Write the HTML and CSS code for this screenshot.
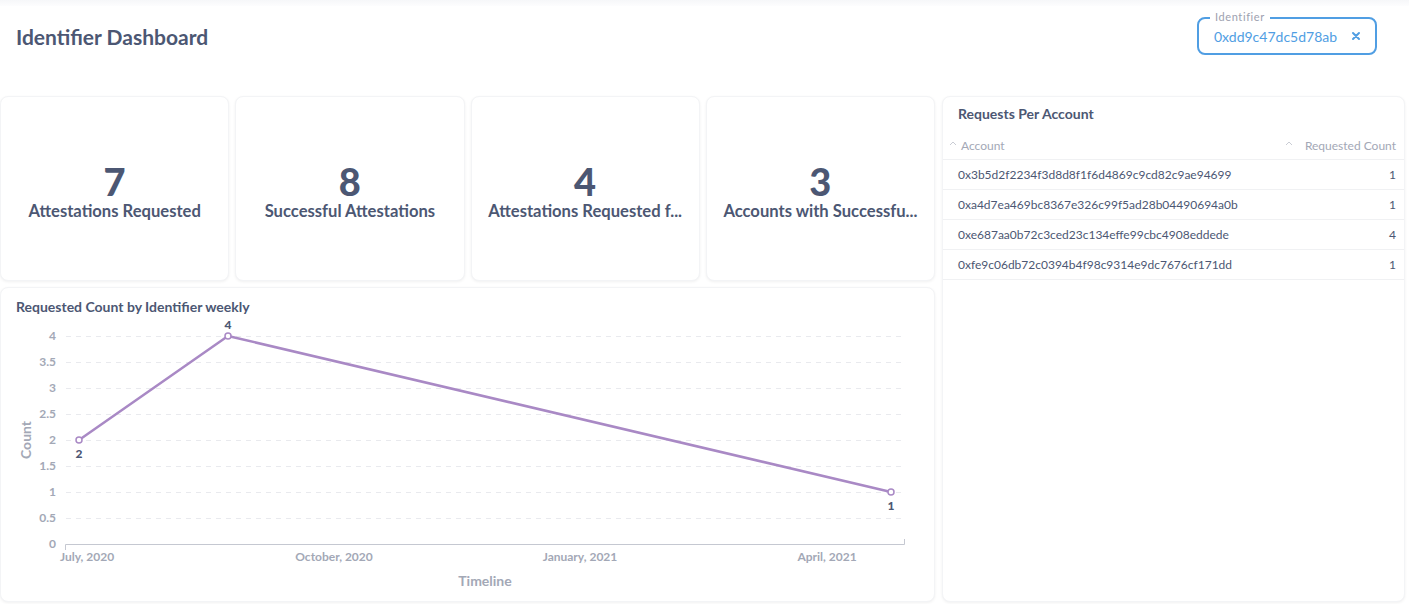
FILE: index.html
```html
<!DOCTYPE html>
<html>
<head>
<meta charset="utf-8">
<link rel="stylesheet" href="styles.css">
</head>
<body>
<div class="topbar"></div>
<header class="header">
  <h1 class="title">Identifier Dashboard</h1>
  <div class="filter">
    <span class="filter-label">Identifier</span>
    <span class="filter-value">0xdd9c47dc5d78ab</span>
    <svg class="filter-x" width="10" height="10" viewBox="0 0 10 10"><path d="M2 2L8 8M8 2L2 8" stroke="#509ee3" stroke-width="2" stroke-linecap="round"/></svg>
  </div>
</header>
<main class="grid">
  <section class="stats">
    <div class="card stat"><div class="stat-num">7</div><div class="stat-label">Attestations Requested</div></div>
    <div class="card stat"><div class="stat-num">8</div><div class="stat-label">Successful Attestations</div></div>
    <div class="card stat"><div class="stat-num">4</div><div class="stat-label">Attestations Requested f...</div></div>
    <div class="card stat"><div class="stat-num">3</div><div class="stat-label">Accounts with Successfu...</div></div>
  </section>
  <section class="card table-card">
    <div class="card-title table-title">Requests Per Account</div>
    <div class="trow thead">
      <span class="th th-left"><svg class="caret" width="8" height="5" viewBox="0 0 8 5"><path d="M1 4L4 1L7 4" fill="none" stroke="#c9ccd4" stroke-width="1"/></svg>Account</span>
      <span class="th th-right"><svg class="caret caret-r" width="8" height="5" viewBox="0 0 8 5"><path d="M1 4L4 1L7 4" fill="none" stroke="#c9ccd4" stroke-width="1"/></svg>Requested Count</span>
    </div>
    <div class="trow"><span>0x3b5d2f2234f3d8d8f1f6d4869c9cd82c9ae94699</span><span>1</span></div>
    <div class="trow"><span>0xa4d7ea469bc8367e326c99f5ad28b04490694a0b</span><span>1</span></div>
    <div class="trow"><span>0xe687aa0b72c3ced23c134effe99cbc4908eddede</span><span>4</span></div>
    <div class="trow"><span>0xfe9c06db72c0394b4f98c9314e9dc7676cf171dd</span><span>1</span></div>
  </section>
  <section class="card chart-card">
    <div class="card-title chart-title">Requested Count by Identifier weekly</div>
    <svg class="chart" width="933" height="284" viewBox="1 317 933 284">
      <g class="grid-lines" stroke="#e9eaee" stroke-width="1" stroke-dasharray="5 5">
        <line x1="66" y1="336.5" x2="904" y2="336.5"/>
        <line x1="66" y1="362.5" x2="904" y2="362.5"/>
        <line x1="66" y1="388.5" x2="904" y2="388.5"/>
        <line x1="66" y1="414.5" x2="904" y2="414.5"/>
        <line x1="66" y1="440.5" x2="904" y2="440.5"/>
        <line x1="66" y1="466.5" x2="904" y2="466.5"/>
        <line x1="66" y1="492.5" x2="904" y2="492.5"/>
        <line x1="66" y1="518.5" x2="904" y2="518.5"/>
      </g>
      <g class="ylab" text-anchor="end">
        <text x="56" y="340">4</text>
        <text x="56" y="366">3.5</text>
        <text x="56" y="392">3</text>
        <text x="56" y="418">2.5</text>
        <text x="56" y="444">2</text>
        <text x="56" y="470">1.5</text>
        <text x="56" y="496">1</text>
        <text x="56" y="522">0.5</text>
        <text x="56" y="548">0</text>
      </g>
      <path d="M65.5 550V544.5H904.5V539" fill="none" stroke="#c5c8d1" stroke-width="1"/>
      <g class="xlab" text-anchor="middle">
        <text x="87" y="561">July, 2020</text>
        <text x="334" y="561">October, 2020</text>
        <text x="580" y="561">January, 2021</text>
        <text x="827" y="561">April, 2021</text>
      </g>
      <text class="axis-title" x="485" y="586" text-anchor="middle">Timeline</text>
      <text class="axis-title" x="31" y="440" text-anchor="middle" transform="rotate(-90 31 440)">Count</text>
      <polyline points="79,440 228,336 891,492" fill="none" stroke="#a989c5" stroke-width="2.5" stroke-linejoin="round"/>
      <g fill="#fff" stroke="#a989c5" stroke-width="1.5">
        <circle cx="79" cy="440" r="3"/>
        <circle cx="228" cy="336" r="3"/>
        <circle cx="891" cy="492" r="3"/>
      </g>
      <g class="dlab" text-anchor="middle">
        <text x="228" y="329">4</text>
        <text x="79" y="458">2</text>
        <text x="891" y="510">1</text>
      </g>
    </svg>
  </section>
</main>
</body>
</html>
```
FILE: styles.css
```css
* { box-sizing: border-box; }
html, body { margin: 0; padding: 0; background: #fff; }
body {
  font-family: Lato, "Noto Sans", sans-serif;
  color: #4c5773;
  width: 1409px;
  height: 604px;
  overflow: hidden;
}
.topbar {
  height: 6px;
  background: linear-gradient(#f6f7f9, #fdfdfe);
}
.header {
  display: flex;
  justify-content: space-between;
  align-items: flex-start;
  padding: 0 32px 0 16px;
  height: 90px;
}
.title {
  margin: 19px 0 0 0;
  font-size: 21px;
  font-weight: 700;
  line-height: 24px;
  color: #4c5773;
}
.filter {
  position: relative;
  margin-top: 11px;
  width: 180px;
  height: 38px;
  border: 2px solid #509ee3;
  border-radius: 8px;
  display: flex;
  align-items: center;
  padding: 0 14px 0 15px;
  justify-content: space-between;
}
.filter-label {
  position: absolute;
  top: -9px;
  left: 11px;
  background: #fff;
  padding: 0 5px;
  font-size: 11px;
  line-height: 14px;
  font-weight: 400;
  letter-spacing: 0.6px;
  color: #9da2b0;
}
.filter-value {
  font-size: 14px;
  font-weight: 400;
  color: #509ee3;
  white-space: nowrap;
}
.filter-x { display: block; flex: none; }
.grid {
  display: grid;
  grid-template-columns: 935px 463px;
  grid-template-rows: 185px 315px;
  column-gap: 7px;
  row-gap: 6px;
}
.card {
  background: #fff;
  border: 1px solid #f3f4f6;
  border-radius: 8px;
  box-shadow: 0 1px 3px rgba(0, 0, 0, 0.06);
}
.stats {
  grid-column: 1;
  grid-row: 1;
  display: grid;
  grid-template-columns: repeat(4, 1fr);
  gap: 6px;
}
.stat {
  display: flex;
  flex-direction: column;
  align-items: center;
  justify-content: center;
  padding-top: 6px;
}
.stat-num {
  font-size: 38px;
  font-weight: 900;
  line-height: 38px;
  color: #4c5773;
}
.stat-label {
  font-size: 16.6px;
  font-weight: 700;
  line-height: 22px;
  color: #4c5773;
  white-space: nowrap;
}
.card-title {
  font-size: 14px;
  font-weight: 700;
  line-height: 20px;
  color: #4c5773;
}
.table-card {
  grid-column: 2;
  grid-row: 1 / span 2;
  display: flex;
  flex-direction: column;
}
.table-title {
  padding: 7px 16px 0 15px;
  height: 34px;
}
.trow {
  display: flex;
  justify-content: space-between;
  align-items: center;
  height: 30px;
  padding: 0 8px 0 15px;
  border-bottom: 1px solid #f0f1f3;
  font-size: 12px;
  color: #4c5773;
}
.thead {
  height: 29px;
  padding-left: 6px;
  font-size: 12px;
  color: #a3a8b6;
}
.th { display: flex; align-items: center; }
.caret { margin-right: 4px; margin-top: -4px; }
.caret-r { margin-right: 12px; }
.chart-card {
  grid-column: 1;
  grid-row: 2;
  display: flex;
  flex-direction: column;
}
.chart-title {
  padding: 9px 16px 0 15px;
  height: 29px;
}
.chart { display: block; }
.ylab text, .xlab text {
  font-family: Lato, sans-serif;
  font-size: 12px;
  font-weight: 700;
  fill: #a3a8b6;
}
.axis-title {
  font-family: Lato, sans-serif;
  font-size: 14px;
  font-weight: 700;
  fill: #a3a8b6;
}
.dlab text {
  font-family: Lato, sans-serif;
  font-size: 12px;
  font-weight: 900;
  fill: #4c5773;
}
```
